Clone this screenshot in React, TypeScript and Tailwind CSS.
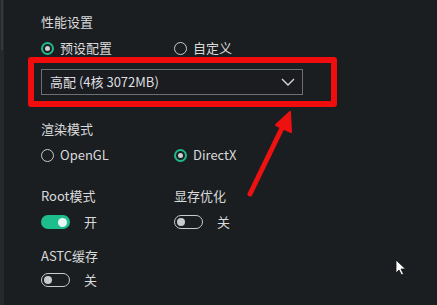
import React, { useState } from 'react';

const font = { fontFamily: '"Noto Sans CJK SC", "Noto Sans", sans-serif' };

const Radio: React.FC<{ checked: boolean; label: string; onClick: () => void }> = ({ checked, label, onClick }) => (
  <button onClick={onClick} className="flex h-[18px] items-center gap-[6px] text-[13px] leading-[18px] text-[#d9dadb]">
    {checked ? (
      <span className="flex h-[13px] w-[13px] items-center justify-center rounded-full border-[2px] border-[#1fb98b]">
        <span className="h-[5px] w-[5px] rounded-full bg-[#cfd0d1]" />
      </span>
    ) : (
      <span className="h-[13px] w-[13px] rounded-full border-[1.5px] border-[#c9cacb]" />
    )}
    <span>{label}</span>
  </button>
);

const Toggle: React.FC<{ on: boolean; onClick: () => void }> = ({ on, onClick }) => (
  <button onClick={onClick} className="flex h-[18px] items-center gap-[14px] text-[13px] leading-[18px] text-[#d9dadb]">
    {on ? (
      <span className="flex h-[14px] w-[29px] items-center justify-end rounded-full bg-[#1dbd8c] pr-[3px]">
        <span className="h-[9px] w-[9px] rounded-full bg-[#e9f7f2]" />
      </span>
    ) : (
      <span className="flex h-[14px] w-[29px] items-center rounded-full border-[1.5px] border-[#c9cacb] pl-[2px]">
        <span className="h-[8px] w-[8px] rounded-full bg-[#c9cacb]" />
      </span>
    )}
    <span>{on ? '开' : '关'}</span>
  </button>
);

export default function App() {
  const [preset, setPreset] = useState(true);
  const [dx, setDx] = useState(true);
  const [root, setRoot] = useState(true);
  const [vram, setVram] = useState(false);
  const [astc, setAstc] = useState(false);

  return (
    <div className="relative flex h-[305px] w-[437px] overflow-hidden bg-[#1b1e21]" style={font}>
      <div className="w-[4px] bg-[#25282c]">
        <div className="ml-[1px] h-[50px] w-[2px] bg-[#34373b]" />
      </div>

      <div className="flex flex-1 flex-col pl-[37px] pt-[13px]">
        <div className="text-[13px] leading-[18px] text-[#d9dadb]">性能设置</div>
        <div className="mt-[8px] flex">
          <div className="w-[133px]">
            <Radio checked={preset} label="预设配置" onClick={() => setPreset(true)} />
          </div>
          <Radio checked={!preset} label="自定义" onClick={() => setPreset(false)} />
        </div>

        <div className="-ml-[13px] w-[309px] rounded-[3px] border-[6px] border-[#f10d0d] pb-[6px] pl-[7px] pt-[6px]">
          <div className="flex h-[26px] w-[262px] items-center justify-between border border-[#6c6f73] bg-[#1a1c1f] pl-[8px] pr-[7px] text-[13px] leading-[18px] text-[#dedfe0]">
            <span>高配 (4核 3072MB)</span>
            <svg width="14" height="8" viewBox="0 0 14 8" fill="none">
              <path d="M1 1l6 6 6-6" stroke="#d6d7d8" strokeWidth="1.4" />
            </svg>
          </div>
        </div>

        <div className="mt-[13px] text-[13px] leading-[18px] text-[#d9dadb]">渲染模式</div>
        <div className="mt-[8px] flex">
          <div className="w-[133px]">
            <Radio checked={!dx} label="OpenGL" onClick={() => setDx(false)} />
          </div>
          <Radio checked={dx} label="DirectX" onClick={() => setDx(true)} />
        </div>

        <div className="mt-[23px] flex">
          <div className="flex w-[133px] flex-col gap-[8px]">
            <div className="text-[13px] leading-[18px] text-[#d9dadb]">Root模式</div>
            <Toggle on={root} onClick={() => setRoot(!root)} />
          </div>
          <div className="flex flex-col gap-[8px]">
            <div className="text-[13px] leading-[18px] text-[#d9dadb]">显存优化</div>
            <Toggle on={vram} onClick={() => setVram(!vram)} />
          </div>
        </div>

        <div className="mt-[16px] flex flex-col gap-[6px]">
          <div className="text-[13px] leading-[18px] text-[#d9dadb]">ASTC缓存</div>
          <Toggle on={astc} onClick={() => setAstc(!astc)} />
        </div>
      </div>

      {/* annotation arrow */}
      <svg className="absolute left-0 top-0" width="437" height="305" viewBox="0 0 437 305" fill="none">
        <path d="M250 194 L282 128" stroke="#ee1111" strokeWidth="5" strokeLinecap="round" />
        <path d="M290 112 L291 132 L276 125 Z" fill="#ee1111" stroke="#ee1111" strokeWidth="2" strokeLinejoin="round" />
      </svg>

      {/* mouse cursor */}
      <svg className="absolute left-[395px] top-[259px]" width="12" height="17" viewBox="0 0 12 17">
        <path d="M1 1 L1 14 L4 11 L6.5 16 L8.5 15 L6 10 L10.5 10 Z" fill="#ffffff" stroke="#111" strokeWidth="0.8" />
      </svg>
    </div>
  );
}
